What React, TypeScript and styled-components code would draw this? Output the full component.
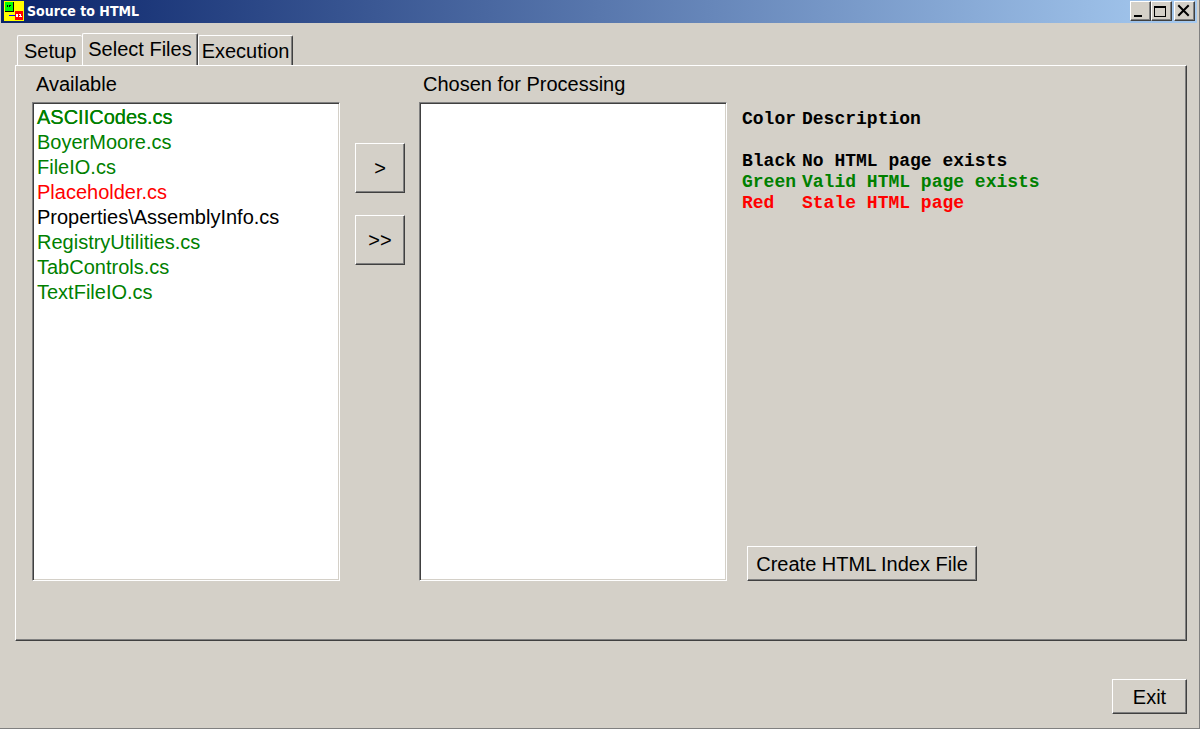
import React from "react";
import styled, { createGlobalStyle } from "styled-components";

const face = "#d4d0c8";
const shade = "#808080";
const dark = "#404040";

const GlobalStyle = createGlobalStyle`
  * { box-sizing: border-box; }
  body {
    margin: 0;
    background: ${face};
    color: #000;
    font: 20px/24px "Liberation Sans", Arial, sans-serif;
  }
`;

const Window = styled.div`
  display: flex;
  flex-direction: column;
  min-height: 100vh;
  background: ${face};
  border: solid ${shade};
  border-width: 0 1px 1px 0;
`;

const TitleBar = styled.header`
  display: flex;
  align-items: flex-start;
  gap: 3px;
  height: 23px;
  margin: 0 2px 0 1px;
  padding: 1px 2px 0 3px;
  background: linear-gradient(to right, #0a246a, #a6caf0);
`;

const Title = styled.h1`
  flex: 1;
  margin: 0;
  color: #fff;
  font: bold 14px/20px "DejaVu Sans Condensed", Tahoma, sans-serif;
`;

const Raised = styled.button`
  padding: 0;
  color: #000;
  background: ${face};
  border: 1px solid;
  border-color: #fff ${dark} ${dark} #fff;
  border-radius: 0;
  box-shadow: inset -1px -1px ${shade};
  font: inherit;
`;

const CaptionButtons = styled.div`
  display: flex;
`;

const CaptionButton = styled(Raised)<{ $apart?: boolean }>`
  display: block;
  width: 21px;
  height: 20px;
  margin-left: ${(p) => (p.$apart ? "2px" : "0")};

  svg { display: block; }
`;

const Main = styled.main`
  flex: 1;
  display: flex;
  flex-direction: column;
  padding: 10px 12px 14px 15px;
`;

const TabStrip = styled.div`
  display: flex;
  align-items: flex-end;
  height: 32px;
  padding-left: 2px;
`;

const Tab = styled.button<{ $active?: boolean; $first?: boolean }>`
  height: ${(p) => (p.$active ? "33px" : "30px")};
  margin-bottom: ${(p) => (p.$active ? "-1px" : "0")};
  padding: ${(p) => (p.$active ? "0 5px 2px" : p.$first ? "0 6px" : "0 3px")};
  color: #000;
  background: ${face};
  border: solid;
  border-width: 1px ${(p) => (p.$first ? "0" : "1px")} 0 1px;
  border-color: #fff ${dark} ${face} #fff;
  border-radius: 2px 2px 0 0;
  box-shadow: ${(p) => (p.$first ? "none" : `inset -1px 0 ${shade}`)};
  font: inherit;
`;

const Panel = styled.section`
  flex: 1;
  display: grid;
  grid-template-columns: minmax(0, 308fr) auto minmax(0, 308fr) minmax(0, 459fr);
  grid-template-rows: 36px 1fr;
  padding: 0 0 59px 16px;
  border: 1px solid;
  border-color: #fff ${dark} ${dark} #fff;
  box-shadow: inset -1px -1px ${shade};
`;

const ListLabel = styled.label<{ $column: number }>`
  grid-column: ${(p) => p.$column};
  padding-left: 4px;
  line-height: 36px;
`;

const FileList = styled.select<{ $column: number }>`
  grid-area: 2 / ${(p) => p.$column};
  width: 100%;
  height: 100%;
  padding: 3px 0 0 1px;
  background: #fff;
  border: 1px solid;
  border-color: ${shade} #fff #fff ${shade};
  border-radius: 0;
  box-shadow: inset 1px 1px ${dark}, inset -1px -1px ${face};
  outline: none;
  overflow: hidden;
  font: inherit;
`;

const FileItem = styled.option<{ $color: string; $current?: boolean }>`
  min-height: 25px;
  padding: 0 3px;
  color: ${(p) => p.$color};
  line-height: 25px;
  text-shadow: ${(p) => (p.$current ? "0 0 0 currentColor" : "none")};
`;

const MoveButtons = styled.div`
  grid-area: 2 / 2;
  display: flex;
  flex-direction: column;
  gap: 22px;
  padding: 41px 14px 0 15px;
`;

const MoveButton = styled(Raised)`
  width: 50px;
  height: 50px;
`;

const Side = styled.div`
  grid-area: 2 / 4;
  display: flex;
  flex-direction: column;
  align-items: flex-start;
  justify-content: space-between;
  padding: 7px 0 0 15px;
`;

const Legend = styled.table`
  border-collapse: collapse;
  font: bold 18px/21px "Liberation Mono", "Courier New", monospace;
  white-space: nowrap;

  th, td {
    height: 21px;
    padding: 0 6px 0 0;
    text-align: left;
  }

  thead tr { vertical-align: top; }
  thead th { height: 42px; }
`;

const LegendRow = styled.tr<{ $color: string }>`
  color: ${(p) => p.$color};
`;

const IndexButton = styled(Raised)`
  width: 230px;
  height: 35px;
  margin-left: 5px;
`;

const Footer = styled.footer`
  display: flex;
  justify-content: flex-end;
  padding-top: 38px;
`;

const ExitButton = styled(Raised)`
  width: 75px;
  height: 35px;
`;

const AppIcon = () => (
  <svg width="20" height="20" viewBox="0 0 20 20" shapeRendering="crispEdges" aria-hidden="true">
    <path fill="#ff0" d="M0 0h20v20H0z" />
    <path fill="#0f0" d="M1 1h8v9H1z" />
    <path fill="#000" d="M3 4h1v2H3zM5 4h2v1H5zM5 5h1v1H5zM9 1h1v10H1v-1h8z" />
    <path fill="#00f" d="M5 14h6v1H5z" />
    <path fill="#f00" d="M11 10h8v9h-8z" />
    <path fill="#fff" d="M12 13h2v3h-2zM15 13h1v1h-1zM16 13h1v3h-1zM15 15h3v1h-3z" />
  </svg>
);

const GREEN = "#008000";
const RED = "#ff0000";
const BLACK = "#000000";

const files = [
  { name: "ASCIICodes.cs", color: GREEN },
  { name: "BoyerMoore.cs", color: GREEN },
  { name: "FileIO.cs", color: GREEN },
  { name: "Placeholder.cs", color: RED },
  { name: "Properties\\AssemblyInfo.cs", color: BLACK },
  { name: "RegistryUtilities.cs", color: GREEN },
  { name: "TabControls.cs", color: GREEN },
  { name: "TextFileIO.cs", color: GREEN },
];

const legend = [
  { name: "Black", text: "No HTML page exists", color: BLACK },
  { name: "Green", text: "Valid HTML page exists", color: GREEN },
  { name: "Red", text: "Stale HTML page", color: RED },
];

export default function App() {
  return (
    <Window>
      <GlobalStyle />
      <TitleBar>
        <AppIcon />
        <Title>Source to HTML</Title>
        <CaptionButtons>
          <CaptionButton aria-label="Minimize">
            <svg width="19" height="18" shapeRendering="crispEdges"><path d="M3 13h8v2H3z" /></svg>
          </CaptionButton>
          <CaptionButton aria-label="Maximize">
            <svg width="19" height="18" shapeRendering="crispEdges">
              <path fillRule="evenodd" d="M2 4h12v11H2zM3 6v8h10V6z" />
            </svg>
          </CaptionButton>
          <CaptionButton aria-label="Close" $apart>
            <svg width="19" height="18"><path d="M4 4l9 9M13 4L4 13" stroke="#000" strokeWidth="2" strokeLinecap="square" /></svg>
          </CaptionButton>
        </CaptionButtons>
      </TitleBar>
      <Main>
        <TabStrip role="tablist">
          <Tab role="tab" $first>Setup</Tab>
          <Tab role="tab" aria-selected="true" $active>Select Files</Tab>
          <Tab role="tab">Execution</Tab>
        </TabStrip>
        <Panel role="tabpanel">
          <ListLabel htmlFor="available" $column={1}>Available</ListLabel>
          <ListLabel htmlFor="chosen" $column={3}>Chosen for Processing</ListLabel>
          <FileList id="available" size={18} multiple $column={1}>
            {files.map((f, i) => (
              <FileItem key={f.name} $color={f.color} $current={i === 0}>{f.name}</FileItem>
            ))}
          </FileList>
          <MoveButtons>
            <MoveButton>&gt;</MoveButton>
            <MoveButton>&gt;&gt;</MoveButton>
          </MoveButtons>
          <FileList id="chosen" size={18} multiple $column={3} />
          <Side>
            <Legend>
              <thead>
                <tr><th>Color</th><th>Description</th></tr>
              </thead>
              <tbody>
                {legend.map((row) => (
                  <LegendRow key={row.name} $color={row.color}>
                    <td>{row.name}</td><td>{row.text}</td>
                  </LegendRow>
                ))}
              </tbody>
            </Legend>
            <IndexButton>Create HTML Index File</IndexButton>
          </Side>
        </Panel>
        <Footer>
          <ExitButton>Exit</ExitButton>
        </Footer>
      </Main>
    </Window>
  );
}
